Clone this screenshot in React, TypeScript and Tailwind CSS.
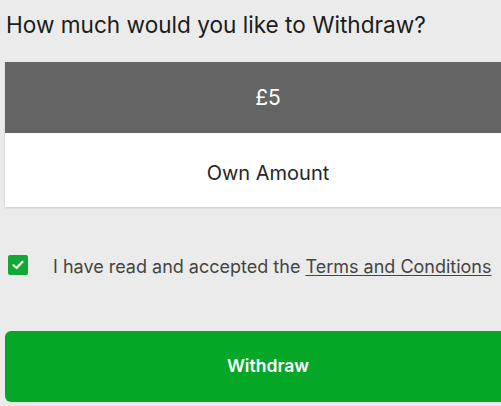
export default function App() {
  return (
    <div
      className="w-[501px] h-[406px] overflow-hidden bg-[#ebebeb] text-[#222]"
      style={{ fontFamily: 'Inter, "Liberation Sans", Arial, sans-serif' }}
    >
      <h1 className="pl-[6px] pt-[13px] text-[22.6px] leading-[24px] text-[#1c1c1c]">
        How much would you like to Withdraw?
      </h1>

      {/* Amount options */}
      <div className="ml-[5px] mt-[25px] w-[526px] shadow-[0_1px_2px_rgba(0,0,0,0.15)]">
        <div className="h-[71px] bg-[#646464] flex items-center justify-center text-white text-[21px]">
          £5
        </div>
        <div className="h-[74px] pt-[5px] bg-white flex items-center justify-center text-[20px] text-[#262626]">
          Own Amount
        </div>
      </div>

      {/* Terms */}
      <div className="flex items-center h-[20px] mt-[48px] ml-[8px]">
        <div className="w-[20px] h-[20px] rounded-[2px] bg-[#13a834] flex items-center justify-center">
          <svg width="14" height="14" viewBox="0 0 14 14" fill="none">
            <path d="M2.5 7.2 L5.6 10 L11.5 3.8" stroke="white" strokeWidth="2.2" strokeLinecap="round" strokeLinejoin="round" />
          </svg>
        </div>
        <span className="ml-[25px] pt-[3px] text-[18px] text-[#444] whitespace-nowrap">
          I have read and accepted the <span className="underline underline-offset-2">Terms and Conditions</span>
        </span>
      </div>

      {/* Withdraw button */}
      <button className="ml-[5px] mt-[56px] w-[526px] h-[71px] rounded-[6px] bg-[#04a726] text-white text-[17.6px] font-semibold flex items-center justify-center">
        Withdraw
      </button>
    </div>
  );
}
